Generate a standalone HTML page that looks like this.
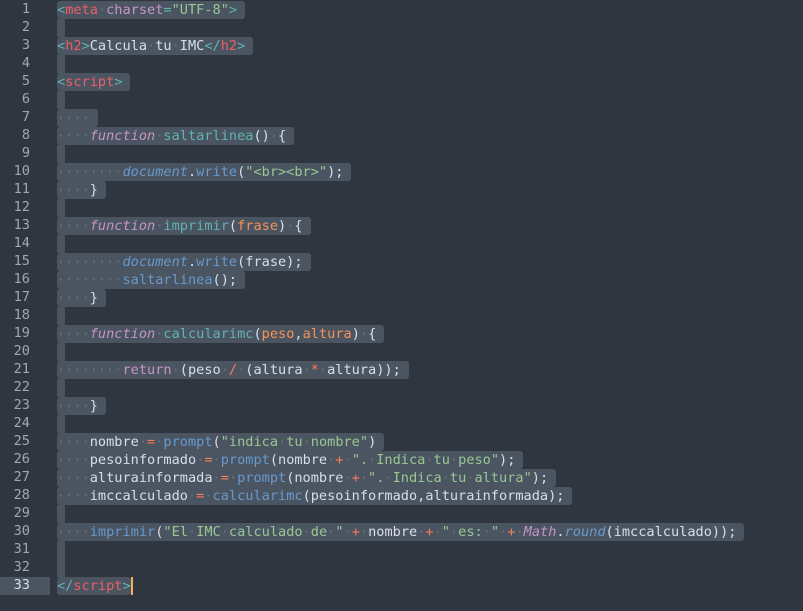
<!DOCTYPE html>
<html><head><meta charset="UTF-8">
<style>
html,body{margin:0;padding:0;background:#303640;width:803px;height:611px;overflow:hidden}
#g{position:absolute;left:0;top:1px;width:50px}
#g div{height:18px;line-height:18px;text-align:right;padding-right:20px;color:#a0a8b3;font:13.6px "DejaVu Sans Mono",monospace;box-sizing:border-box;width:50px}
#g div.cur{background:#4b5561;color:#d8dee9}
#c{position:absolute;left:57px;top:1px;font:13.6px "DejaVu Sans Mono",monospace;color:#d8dee9}
.l{height:18px;line-height:18px;white-space:pre}
.s{display:inline-block;background:#4b5561;padding-right:8px;border-radius:3px;height:18px;vertical-align:top}
.e{display:inline-block;background:#4b5561;width:8px;height:18px;vertical-align:top}
.d{color:#65737e}
.t{color:#5fb3b3}.r{color:#ec5f67}.a{color:#c594c5}.st{color:#99c794}
.k{color:#c594c5;font-style:italic}.f{color:#5fb3b3}.p{color:#f99157}.o{color:#f97b58}
.b{color:#6699cc}.bi{color:#6699cc;font-style:italic}
.cursor{display:inline-block;width:2px;height:18px;background:#f9ae58;vertical-align:top}
</style></head><body>
<div id="g">
<div>1</div><div>2</div><div>3</div><div>4</div><div>5</div><div>6</div><div>7</div><div>8</div><div>9</div><div>10</div><div>11</div><div>12</div><div>13</div><div>14</div><div>15</div><div>16</div><div>17</div><div>18</div><div>19</div><div>20</div><div>21</div><div>22</div><div>23</div><div>24</div><div>25</div><div>26</div><div>27</div><div>28</div><div>29</div><div>30</div><div>31</div><div>32</div><div class="cur">33</div>
</div>
<div id="c">
<div class="l"><span class="s"><span class="t">&lt;</span><span class="r">meta</span><span class="d">·</span><span class="a">charset</span><span class="t">=</span><span class="st">"UTF-8"</span><span class="t">&gt;</span></span></div>
<div class="l"><span class="e"></span></div>
<div class="l"><span class="s"><span class="t">&lt;</span><span class="r">h2</span><span class="t">&gt;</span>Calcula<span class="d">·</span>tu<span class="d">·</span>IMC<span class="t">&lt;/</span><span class="r">h2</span><span class="t">&gt;</span></span></div>
<div class="l"><span class="e"></span></div>
<div class="l"><span class="s"><span class="t">&lt;</span><span class="r">script</span><span class="t">&gt;</span></span></div>
<div class="l"><span class="e"></span></div>
<div class="l"><span class="s"><span class="d">····</span></span></div>
<div class="l"><span class="s"><span class="d">····</span><span class="k">function</span><span class="d">·</span><span class="f">saltarlinea</span>()<span class="d">·</span>{</span></div>
<div class="l"><span class="e"></span></div>
<div class="l"><span class="s"><span class="d">········</span><span class="bi">document</span>.<span class="b">write</span>(<span class="st">"&lt;br&gt;&lt;br&gt;"</span>);</span></div>
<div class="l"><span class="s"><span class="d">····</span>}</span></div>
<div class="l"><span class="e"></span></div>
<div class="l"><span class="s"><span class="d">····</span><span class="k">function</span><span class="d">·</span><span class="f">imprimir</span>(<span class="p">frase</span>)<span class="d">·</span>{</span></div>
<div class="l"><span class="e"></span></div>
<div class="l"><span class="s"><span class="d">········</span><span class="bi">document</span>.<span class="b">write</span>(frase);</span></div>
<div class="l"><span class="s"><span class="d">········</span><span class="b">saltarlinea</span>();</span></div>
<div class="l"><span class="s"><span class="d">····</span>}</span></div>
<div class="l"><span class="e"></span></div>
<div class="l"><span class="s"><span class="d">····</span><span class="k">function</span><span class="d">·</span><span class="f">calcularimc</span>(<span class="p">peso</span>,<span class="p">altura</span>)<span class="d">·</span>{</span></div>
<div class="l"><span class="e"></span></div>
<div class="l"><span class="s"><span class="d">········</span><span class="a">return</span><span class="d">·</span>(peso<span class="d">·</span><span class="o">/</span><span class="d">·</span>(altura<span class="d">·</span><span class="o">*</span><span class="d">·</span>altura));</span></div>
<div class="l"><span class="e"></span></div>
<div class="l"><span class="s"><span class="d">····</span>}</span></div>
<div class="l"><span class="e"></span></div>
<div class="l"><span class="s"><span class="d">····</span>nombre<span class="d">·</span><span class="o">=</span><span class="d">·</span><span class="b">prompt</span>(<span class="st">"indica<span class="d">·</span>tu<span class="d">·</span>nombre"</span>)</span></div>
<div class="l"><span class="s"><span class="d">····</span>pesoinformado<span class="d">·</span><span class="o">=</span><span class="d">·</span><span class="b">prompt</span>(nombre<span class="d">·</span><span class="o">+</span><span class="d">·</span><span class="st">".<span class="d">·</span>Indica<span class="d">·</span>tu<span class="d">·</span>peso"</span>);</span></div>
<div class="l"><span class="s"><span class="d">····</span>alturainformada<span class="d">·</span><span class="o">=</span><span class="d">·</span><span class="b">prompt</span>(nombre<span class="d">·</span><span class="o">+</span><span class="d">·</span><span class="st">".<span class="d">·</span>Indica<span class="d">·</span>tu<span class="d">·</span>altura"</span>);</span></div>
<div class="l"><span class="s"><span class="d">····</span>imccalculado<span class="d">·</span><span class="o">=</span><span class="d">·</span><span class="b">calcularimc</span>(pesoinformado,alturainformada);</span></div>
<div class="l"><span class="e"></span></div>
<div class="l"><span class="s"><span class="d">····</span><span class="b">imprimir</span>(<span class="st">"El<span class="d">·</span>IMC<span class="d">·</span>calculado<span class="d">·</span>de<span class="d">·</span>"</span><span class="d">·</span><span class="o">+</span><span class="d">·</span>nombre<span class="d">·</span><span class="o">+</span><span class="d">·</span><span class="st">"<span class="d">·</span>es:<span class="d">·</span>"</span><span class="d">·</span><span class="o">+</span><span class="d">·</span><span class="k">Math</span>.<span class="bi">round</span>(imccalculado));</span></div>
<div class="l"><span class="e"></span></div>
<div class="l"><span class="e"></span></div>
<div class="l"><span class="s" style="padding-right:0"><span class="t">&lt;/</span><span class="r">script</span><span class="t">&gt;</span></span><span class="cursor"></span></div>
</div>
</body></html>
